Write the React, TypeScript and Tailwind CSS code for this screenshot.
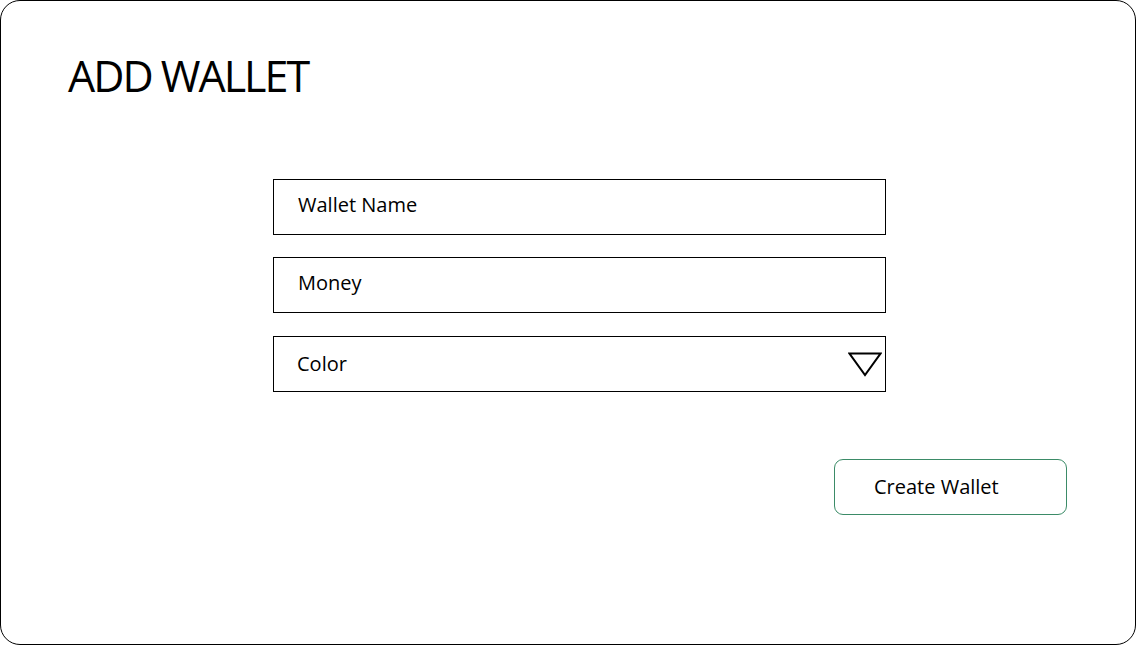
export default function App() {
  const font = { fontFamily: '"Open Sans", "Noto Sans", sans-serif' };
  return (
    <div className="w-[1136px] h-[645px] bg-white">
      <div
        className="w-[1136px] h-[645px] border border-black rounded-[20px] flex flex-col text-black"
        style={font}
      >
        <h1 className="pl-[67px] pt-[46px] text-[43px] leading-[58px] tracking-[-2px] font-normal">
          ADD WALLET
        </h1>
        <div className="ml-[272px] mt-[74px] w-[613px] flex flex-col gap-[22px]">
          <div className="h-[56px] border border-black flex items-center pl-[24px] text-[20px] leading-none pb-[4px]">
            Wallet Name
          </div>
          <div className="h-[56px] border border-black flex items-center pl-[24px] text-[20px] leading-none pb-[4px]">
            Money
          </div>
          <div className="mt-[1px] h-[56px] border border-black flex items-center justify-between pl-[23px] pr-[3px] text-[20px] leading-none">
            <span>Color</span>
            <svg width="34" height="25" viewBox="0 0 34 25">
              <polygon points="1.5,1.5 32.5,1.5 17,23" fill="none" stroke="black" strokeWidth="2" strokeLinejoin="miter" />
            </svg>
          </div>
        </div>
        <div className="self-end mr-[68px] mt-[67px]">
          <button className="w-[233px] h-[56px] border border-[#3b8b67] rounded-[9px] flex items-center pl-[39px] text-[20px] leading-none bg-white">
            Create Wallet
          </button>
        </div>
      </div>
    </div>
  );
}
